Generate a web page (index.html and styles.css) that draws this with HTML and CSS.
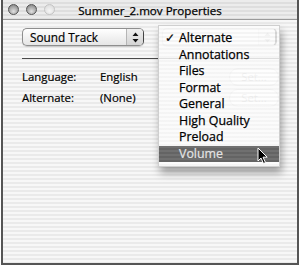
FILE: index.html
```html
<!DOCTYPE html>
<html>
<head>
<meta charset="utf-8">
<link rel="stylesheet" href="styles.css">
</head>
<body>
<div class="window">
  <div class="titlebar">
    <div class="lights">
      <span class="light"></span>
      <span class="light"></span>
      <span class="light off"></span>
    </div>
    <div class="title">Summer_2.mov Properties</div>
  </div>
  <div class="content">
    <div class="toprow">
      <div class="popup">
        <span class="popup-label">Sound Track</span>
        <span class="popup-arrows">
          <svg width="7" height="11" viewBox="0 0 7 11"><path d="M3.5 0.5 L6.5 4 L0.5 4 Z M3.5 10.5 L6.5 7 L0.5 7 Z" fill="#111"/></svg>
        </span>
      </div>
      <div class="popup disabled">
        <span class="popup-label"></span>
        <span class="popup-arrows">
          <svg width="7" height="11" viewBox="0 0 7 11"><path d="M3.5 0.5 L6.5 4 L0.5 4 Z M3.5 10.5 L6.5 7 L0.5 7 Z" fill="#bbb"/></svg>
        </span>
      </div>
    </div>
    <div class="sep"></div>
    <div class="row">
      <span class="label">Language:</span>
      <span class="value">English</span>
      <span class="setbtn">Set...</span>
    </div>
    <div class="row">
      <span class="label">Alternate:</span>
      <span class="value">(None)</span>
      <span class="setbtn">Set...</span>
    </div>
  </div>

  <div class="menu">
    <div class="item"><span class="check">✓</span>Alternate</div>
    <div class="item">Annotations</div>
    <div class="item">Files</div>
    <div class="item">Format</div>
    <div class="item">General</div>
    <div class="item">High Quality</div>
    <div class="item">Preload</div>
    <div class="item selected">Volume</div>
  </div>

  <svg class="cursor" width="12" height="18" viewBox="0 0 12 18">
    <path d="M1 1 L1 14 L4 11 L6.5 16.5 L8.5 15.5 L6 10.2 L10.2 10.2 Z" fill="#000" stroke="#fff" stroke-width="1"/>
  </svg>
</div>
</body>
</html>
```

FILE: styles.css
```css
html, body {
  margin: 0;
  padding: 0;
  background: #ffffff;
}

body {
  width: 300px;
  height: 266px;
  overflow: hidden;
  font-family: "Open Sans", "DejaVu Sans", sans-serif;
  color: #000;
}

.window {
  position: relative;
  margin-left: 1px;
  width: 294px;
  height: 263px;
  border: 2px solid #555;
  border-top: 0;
  background: repeating-linear-gradient(to bottom, #f7f7f7 0 2px, #eaeaea 2px 4px);
}

.titlebar {
  position: relative;
  height: 19px;
  border-bottom: 1px solid #9a9a9a;
  background: repeating-linear-gradient(to bottom, #ececec 0 2px, #dedede 2px 4px);
  display: flex;
  align-items: center;
}

.lights {
  position: absolute;
  left: 5px;
  top: 4px;
  display: flex;
  gap: 7px;
}

.light {
  width: 9px;
  height: 9px;
  border-radius: 50%;
  border: 1.5px solid #555;
  background: radial-gradient(circle at 50% 70%, #e0e0e0 0, #a8a8a8 55%, #777 100%);
}

.light.off {
  border-color: #c4c4c4;
  background: radial-gradient(circle at 50% 65%, #f6f6f6 0, #e0e0e0 70%, #d2d2d2 100%);
}

.title {
  flex: 1;
  text-align: center;
  font-size: 11.6px;
  color: #000;
  padding-top: 1px;
  -webkit-text-stroke: 0.25px #000;
}

.content {
  padding: 8px 18px 0 19px;
}

.toprow {
  display: flex;
  gap: 18px;
  height: 18px;
}

.popup {
  display: flex;
  width: 120px;
  height: 16px;
  border: 1px solid #8e8e8e;
  border-right-color: #444;
  border-radius: 5px;
  background: linear-gradient(to bottom, #ffffff 0, #f2f2f2 50%, #e6e6e6 100%);
  box-shadow: 0 1px 1px rgba(0,0,0,0.15);
  align-items: center;
}

.popup.disabled {
  width: 112px;
  border-color: #d8d8d8;
  border-right: 2px solid #333;
  background: #f4f4f4;
}

.popup-label {
  flex: 1;
  padding-left: 7px;
  font-size: 11.8px;
  line-height: 16px;
  -webkit-text-stroke: 0.2px #000;
}

.popup-arrows {
  width: 16px;
  height: 16px;
  display: flex;
  align-items: center;
  justify-content: center;
  border-left: 1px solid #b5b5b5;
  background: linear-gradient(to bottom, #eeeeee, #d4d4d4);
  border-radius: 0 4px 4px 0;
}

.popup.disabled .popup-arrows {
  background: #eeeeee;
  border-left-color: #e2e2e2;
}

.sep {
  margin-top: 12px;
  height: 1px;
  background: #4a4a4a;
}

.row {
  display: flex;
  align-items: center;
  height: 19px;
  margin-top: 8px;
  font-size: 11.4px;
  -webkit-text-stroke: 0.2px #000;
}

.row + .row {
  margin-top: 2px;
}

.label {
  width: 78px;
}

.value {
  flex: 1;
}

.setbtn {
  width: 48px;
  height: 16px;
  border: 1px solid #d6d6d6;
  border-radius: 9px;
  background: #fbfbfb;
  color: #bdbdbd;
  -webkit-text-stroke: 0;
  text-align: center;
  line-height: 16px;
  font-size: 11.4px;
}

.menu {
  position: absolute;
  left: 155px;
  top: 25px;
  width: 120px;
  padding: 4px 0 4px 0;
  background: repeating-linear-gradient(to bottom, rgba(255,255,255,0.82) 0 2px, rgba(244,244,244,0.82) 2px 4px);
  border: 1px solid #cfcfcf;
  box-shadow: 2px 6px 8px rgba(0,0,0,0.35);
}

.item {
  position: relative;
  height: 16.5px;
  line-height: 16.5px;
  padding-left: 20px;
  font-size: 12.4px;
  color: #000;
  -webkit-text-stroke: 0.25px #000;
}

.check {
  position: absolute;
  left: 6px;
  top: 0;
  font-size: 12px;
  font-family: "DejaVu Sans", sans-serif;
}

.item.selected {
  background: repeating-linear-gradient(to bottom, #707070 0 2px, #646464 2px 4px);
  color: #e4e4e4;
  -webkit-text-stroke: 0.2px #e4e4e4;
}

.cursor {
  position: absolute;
  left: 254px;
  top: 147px;
}
```
